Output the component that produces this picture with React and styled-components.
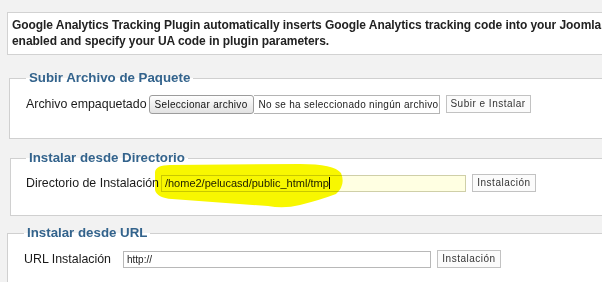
import React from "react";
import styled, { createGlobalStyle } from "styled-components";

const GlobalStyle = createGlobalStyle`
  html, body {
    margin: 0;
    padding: 0;
    background: #f2f2f2;
    overflow: hidden;
  }
  body {
    font-family: "Liberation Sans", Arial, sans-serif;
    color: #222;
  }
`;

const Page = styled.div`
  position: relative;
  width: 680px;
  height: 282px;
  padding: 12px 0 0 7px;
  box-sizing: border-box;
  overflow: hidden;
`;

/* message box at the top */
const Notice = styled.div`
  background: #fff;
  border: 1px solid #d2d2d2;
  padding: 4px 5px 5px 4px;
  font-size: 12px;
  font-weight: bold;
  letter-spacing: -0.06px;
  line-height: 16px;
  white-space: nowrap;
  overflow: hidden;
`;

const Panel = styled.fieldset`
  margin: ${(p) => p.$top}px 0 0 ${(p) => p.$left}px;
  padding: ${(p) => p.$padTop}px 0 ${(p) => p.$bottom}px ${(p) => p.$pad}px;
  background: #fff;
  border: 1px solid #d0d0d0;
  min-width: 0;
`;

const Legend = styled.legend`
  padding: 0 3px;
  font-size: 13.3px;
  font-weight: bold;
  line-height: 16px;
  color: #33638c;
`;

const Row = styled.div`
  display: flex;
  align-items: center;
  height: 20px;
`;

const Label = styled.span`
  font-size: 12.4px;
  color: #1a1a1a;
  width: ${(p) => (p.$width ? `${p.$width}px` : "auto")};
  margin-right: ${(p) => p.$gap || 0}px;
  flex-shrink: 0;
`;

const FileField = styled.div`
  display: flex;
  height: 19px;
`;

const FileButton = styled.div`
  width: 103px;
  height: 17px;
  border: 1px solid #9c9c9c;
  border-radius: 3px;
  background: linear-gradient(#fefefe, #e2e2e2);
  font-size: 10px;
  letter-spacing: 0.3px;
  line-height: 17px;
  text-align: center;
  color: #111;
`;

const FileName = styled.div`
  width: 180px;
  height: 17px;
  border: 1px solid #b4b4b4;
  border-left: none;
  padding-left: 5px;
  font-size: 10px;
  letter-spacing: 0.3px;
  line-height: 17px;
  white-space: nowrap;
  overflow: hidden;
  color: #222;
`;

const TextBox = styled.div`
  width: ${(p) => p.$width}px;
  height: 15px;
  border: 1px solid ${(p) => (p.$tint ? "#cfcfa8" : "#b8b8b8")};
  background: ${(p) => (p.$tint ? "#ffffe2" : "#fff")};
  padding-left: 3px;
  font-size: ${(p) => (p.$small ? 10 : 11)}px;
  line-height: 15px;
  color: #222;
  box-sizing: content-box;
  display: flex;
  align-items: center;
  white-space: nowrap;
`;

const Caret = styled.span`
  display: inline-block;
  width: 1px;
  height: 12px;
  background: #000;
`;

const Button = styled.div`
  margin-left: 6px;
  width: ${(p) => p.$width}px;
  height: 16px;
  border: 1px solid #c2c2c2;
  background: #fbfbfb;
  font-size: 10px;
  letter-spacing: 0.5px;
  line-height: 16px;
  text-align: center;
  color: #333;
`;

const Highlight = styled.svg`
  position: absolute;
  left: 0;
  top: 0;
  mix-blend-mode: multiply;
  pointer-events: none;
`;

export default function App() {
  return (
    <>
      <GlobalStyle />
      <Page>
        <Notice>
          Google Analytics Tracking Plugin automatically inserts Google Analytics tracking code into your Joomla 1.5 website. Make sure plugin is
          <br />
          enabled and specify your UA code in plugin parameters.
        </Notice>

        <Panel $top={15} $left={2} $pad={16} $padTop={8} $bottom={24}>
          <Legend>Subir Archivo de Paquete</Legend>
          <Row>
            <Label $gap={2}>Archivo empaquetado</Label>
            <FileField>
              <FileButton>Seleccionar archivo</FileButton>
              <FileName>No se ha seleccionado ningún archivo</FileName>
            </FileField>
            <Button $width={83}>Subir e Instalar</Button>
          </Row>
        </Panel>

        <Panel $top={11} $left={3} $pad={15} $padTop={7} $bottom={22}>
          <Legend>Instalar desde Directorio</Legend>
          <Row>
            <Label $gap={2}>Directorio de Instalación</Label>
            <TextBox $width={300} $tint>
              /home2/pelucasd/public_html/tmp
              <Caret />
            </TextBox>
            <Button $width={62}>Instalación</Button>
          </Row>
        </Panel>

        <Panel $top={9} $left={0} $pad={16} $padTop={8} $bottom={22}>
          <Legend>Instalar desde URL</Legend>
          <Row>
            <Label $width={99}>URL Instalación</Label>
            <TextBox $width={303} $small>
              http://
            </TextBox>
            <Button $width={62}>Instalación</Button>
          </Row>
        </Panel>

        <Highlight width="602" height="282" viewBox="0 0 602 282">
          <path
            d="M155,172 Q156,165 170,165 L300,164 Q334,164 341,173 Q346,185 336,194 Q320,200 300,205 Q284,209 268,206 L172,199 Q157,198 155,190 Z"
            fill="#f8f700"
          />
        </Highlight>
      </Page>
    </>
  );
}
